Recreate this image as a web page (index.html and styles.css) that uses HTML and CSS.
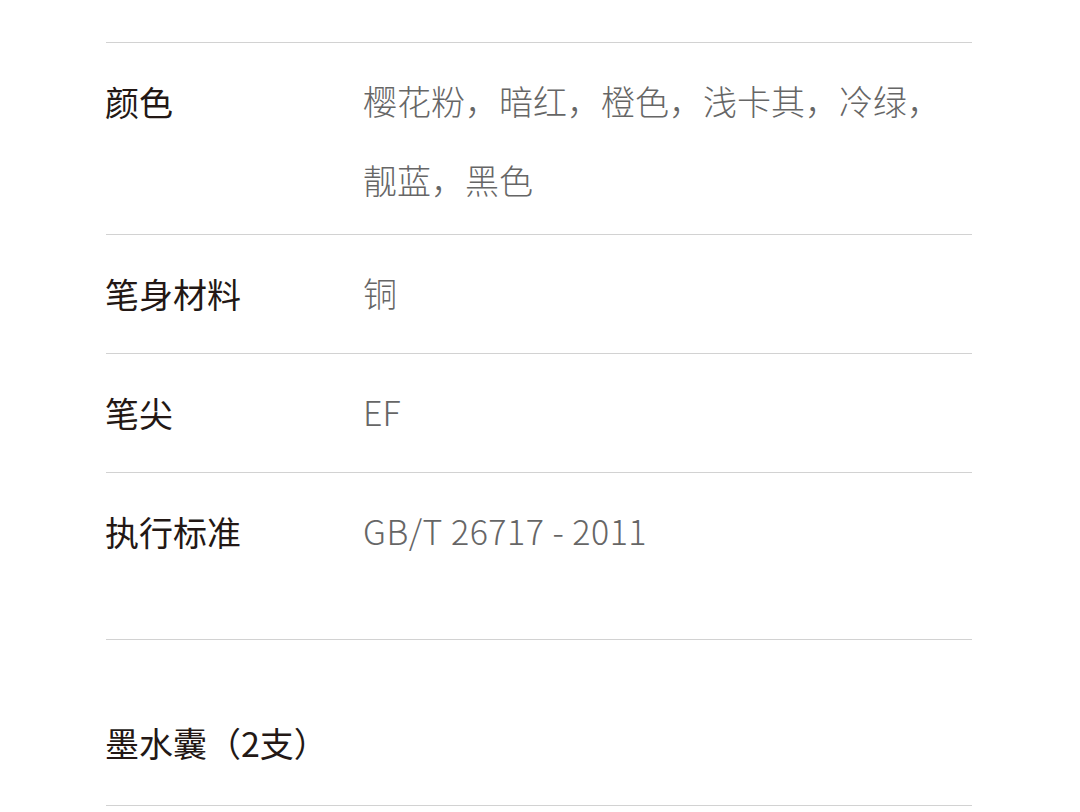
FILE: index.html
```html
<!DOCTYPE html>
<html lang="zh-CN">
<head>
<meta charset="utf-8">
<title>规格参数</title>
<link rel="stylesheet" href="styles.css">
</head>
<body>
<main class="page">
  <section class="spec">
    <div class="row">
      <div class="label">颜色</div>
      <div class="value">樱花粉，暗红，橙色，浅卡其，冷绿，靓蓝，黑色</div>
    </div>
    <div class="row">
      <div class="label">笔身材料</div>
      <div class="value">铜</div>
    </div>
    <div class="row">
      <div class="label">笔尖</div>
      <div class="value">EF</div>
    </div>
    <div class="row">
      <div class="label">执行标准</div>
      <div class="value value-latin">GB/T 26717 - 2011</div>
    </div>
  </section>
  <section class="group">
    <h2 class="group-title">墨水囊（2支）</h2>
  </section>
</main>
</body>
</html>
```

FILE: styles.css
```css
html, body {
  margin: 0;
  padding: 0;
  background: #ffffff;
}

body {
  font-family: "Noto Sans CJK SC", "Noto Sans", sans-serif;
  width: 1080px;
  height: 812px;
  overflow: hidden;
  text-spacing-trim: space-all;
  font-kerning: none;
  font-feature-settings: "chws" 0, "halt" 0, "palt" 0, "kern" 0;
}

.page {
  padding: 42px 0 0 106px;
  width: 866px;
}

.spec {
  padding-bottom: 48px;
}

.row {
  display: flex;
  align-items: flex-start;
  border-top: 1px solid #d2d2d2;
}

.label {
  flex: 0 0 258px;
  margin-left: -1px;
  font-size: 34px;
  line-height: 40px;
  padding: 39px 0 39px;
  color: #231815;
}

.value {
  flex: 0 1 592px;
  font-size: 34px;
  font-weight: 300;
  line-height: 79px;
  padding: 18px 0 15px;
  color: #666666;
}

.value-latin {
  letter-spacing: 0.5px;
}

.group {
  border-top: 1px solid #d2d2d2;
  border-bottom: 1px solid #d2d2d2;
}

.group-title {
  margin: 0 0 0 -1px;
  font-size: 34px;
  font-weight: normal;
  line-height: 40px;
  padding: 83px 0 42px;
  color: #231815;
}
```
